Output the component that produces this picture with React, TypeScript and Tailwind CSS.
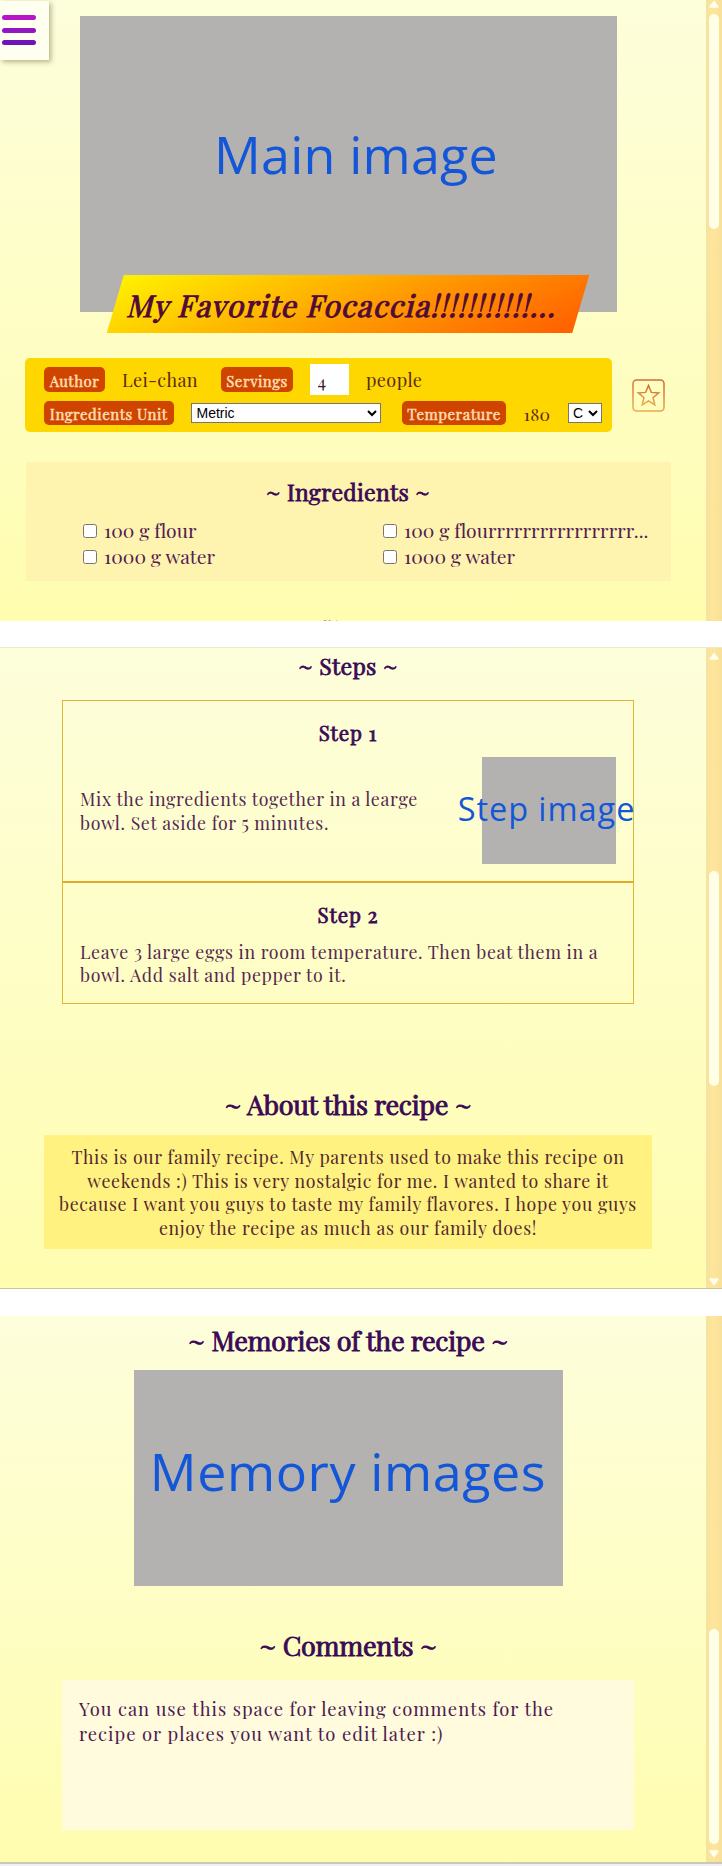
import type { ReactNode } from "react";

function Panel({ className, track, children }: { className: string; track: ReactNode; children: ReactNode }) {
  return (
    <section className={`flex w-full overflow-hidden bg-linear-to-b from-[#fdfedb] to-[#fffdaf] ${className}`}>
      <div className="flex w-[696px] shrink-0 flex-col items-center">{children}</div>
      <div className="ml-auto flex w-4 shrink-0 flex-col items-center bg-linear-to-r from-[#f6e3a0] via-[#ffe598] to-[#f6e09b]">
        {track}
      </div>
    </section>
  );
}

function Arrow({ down = false }: { down?: boolean }) {
  return (
    <svg viewBox="0 0 12 8" className="h-2 w-3 shrink-0">
      <path
        d={down ? "M2 1h8L6 6.5z" : "M2 7h8L6 1.5z"}
        fill="#fffff0"
        stroke="#fffff0"
        strokeWidth="1.4"
        strokeLinejoin="round"
      />
    </svg>
  );
}

function Thumb({ className }: { className: string }) {
  return <div className={`h-[215px] w-2.5 shrink-0 rounded-full bg-[#ffffe8] ${className}`} />;
}

function SmallHeading({ children }: { children: ReactNode }) {
  return (
    <h2 className="text-[23px] leading-8 font-normal tracking-[0.3px] whitespace-nowrap text-[#3b0a56] [-webkit-text-stroke:0.8px_#3b0a56]">
      {children}
    </h2>
  );
}

function LargeHeading({ className, children }: { className: string; children: ReactNode }) {
  return (
    <h2
      className={`text-[27px] leading-9 font-normal tracking-[-0.28px] whitespace-nowrap text-[#3b0a56] [-webkit-text-stroke:0.9px_#3b0a56] ${className}`}
    >
      {children}
    </h2>
  );
}

function StepTitle({ children }: { children: ReactNode }) {
  return (
    <h3 className="text-center text-[20.5px] leading-7 font-normal tracking-[0.9px] text-[#3b0a56] [-webkit-text-stroke:0.8px_#3b0a56]">
      {children}
    </h3>
  );
}

function Tag({ className, children }: { className: string; children: ReactNode }) {
  return (
    <span
      className={`flex h-[24.5px] items-center justify-center rounded-[5px] bg-[#cf4500] pt-0.5 text-[15px] leading-6 tracking-[0.5px] whitespace-nowrap text-[#ffdfb3] [-webkit-text-stroke:0.5px_#ffdfb3] ${className}`}
    >
      {children}
    </span>
  );
}

function Ingredient({ children }: { children: ReactNode }) {
  return (
    <label className="flex h-[25.7px] items-center text-[19.3px] leading-[25.7px] tracking-[0.04px] whitespace-nowrap text-[#502050]">
      <input type="checkbox" className="mr-[7px] h-3.5 w-3.5" />
      {children}
    </label>
  );
}

export default function App() {
  return (
    <main className="flex h-[1866px] w-[722px] flex-col overflow-hidden bg-white font-['Playfair_Display','Liberation_Serif',serif]">
      <Panel
        className="h-[620.5px]"
        track={
          <>
            <Arrow />
            <Thumb className="mt-1.5" />
          </>
        }
      >
        <button
          aria-label="Menu"
          className="absolute top-px left-0 flex h-[59px] w-[48.5px] flex-col gap-[7.5px] bg-[#fffff0] pt-3.5 pl-0.5 shadow-[2px_2px_5px_rgba(90,90,40,0.45)]"
        >
          <span className="h-[5px] w-[34px] rounded-full bg-[#b915c8]" />
          <span className="h-[5px] w-[34px] rounded-full bg-[#9216c4]" />
          <span className="h-[5px] w-[34px] rounded-full bg-[#6f14b8]" />
        </button>

        <div className="mt-4 flex h-[296px] w-[537px] shrink-0 justify-center bg-[#b3b2b0] pt-[102px] pl-4 font-['Open_Sans',sans-serif] text-[52px] leading-[71px] tracking-[0.2px] text-[#1357d8]">
          Main image
        </div>
        <div className="-mt-[37px] flex h-[58px] w-[482.5px] shrink-0 items-center bg-[linear-gradient(155deg,#ffee00_5%,#ff9c00_55%,#ff6200_95%)] pt-0.5 pl-[22.5px] [clip-path:polygon(17px_0,100%_0,465.5px_100%,0_100%)]">
          <h1 className="-skew-x-[14deg] text-[30px] leading-10 font-normal tracking-[1.18px] whitespace-nowrap text-[#520a38] [-webkit-text-stroke:1px_#520a38]">
            My Favorite Focaccia!!!!!!!!!!!...
          </h1>
        </div>

        <div className="mt-[25px] flex w-full shrink-0 items-center pl-[25px]">
          <div className="flex h-[73.5px] w-[586.5px] flex-col rounded-[5px] bg-[#ffd700] pt-1.5 pl-[19px] text-[18px] tracking-[0.4px] text-[#5a2a1c]">
            <div className="flex h-[31px] items-center">
              <Tag className="w-[61px]">Author</Tag>
              <span className="ml-[17px] w-[99px] pt-0.5">Lei-chan</span>
              <Tag className="w-[72px]">Servings</Tag>
              <input
                defaultValue="4"
                className="ml-[16.5px] h-[31px] w-[39px] bg-white pt-0.5 pl-2 text-[17.5px] text-[#3b2030]"
              />
              <span className="ml-[17.5px] pt-0.5">people</span>
            </div>
            <div className="mt-[5.5px] flex h-[25px] items-center">
              <Tag className="w-[129.5px]">Ingredients Unit</Tag>
              <select className="ml-[17px] h-5 w-[190px] border border-[#767676] bg-white pl-px font-['Liberation_Sans',sans-serif] text-[14px] leading-4 tracking-normal text-black">
                <option>Metric</option>
              </select>
              <Tag className="ml-[21.5px] w-[104px]">Temperature</Tag>
              <span className="ml-[17.5px] w-[44.5px] pt-0.5 text-[17.5px] tracking-[0.2px]">180</span>
              <select className="h-5 w-[34px] border border-[#767676] bg-white font-['Liberation_Sans',sans-serif] text-[14px] leading-4 tracking-normal text-black">
                <option>C</option>
              </select>
            </div>
          </div>
          <svg viewBox="0 0 33 33" className="mt-px ml-5 h-[33px] w-[33px]" fill="none">
            <defs>
              <linearGradient id="star" x1="0.6" y1="0" x2="0.4" y2="1">
                <stop offset="0" stopColor="#cf6b3c" />
                <stop offset="1" stopColor="#e9ad4c" />
              </linearGradient>
            </defs>
            <rect x="1" y="1" width="31" height="31" rx="3.5" stroke="url(#star)" strokeWidth="1.5" />
            <path
              d="M16.5 6.5l2.8 6.9 7.4.5-5.7 4.8 1.8 7.2-6.3-4-6.3 4 1.8-7.2-5.7-4.8 7.4-.5z"
              stroke="url(#star)"
              strokeWidth="1.5"
            />
          </svg>
        </div>

        <div className="mt-[30.5px] flex h-[119px] w-[645px] shrink-0 flex-col items-center bg-[#fff3b0] pt-[13.5px]">
          <SmallHeading>~ Ingredients ~</SmallHeading>
          <div className="mt-[10.5px] grid w-full grid-cols-[300px_1fr] pl-[57.5px]">
            <Ingredient>100 g flour</Ingredient>
            <Ingredient>100 g flourrrrrrrrrrrrrrrrr...</Ingredient>
            <Ingredient>1000 g water</Ingredient>
            <Ingredient>1000 g water</Ingredient>
          </div>
        </div>
        <div className="mt-[30.5px] shrink-0">
          <SmallHeading>~ Steps ~</SmallHeading>
        </div>
      </Panel>

      <Panel
        className="mt-[26.5px] h-[642px] border-t border-b border-t-[#ecebcf] border-b-[#c9c5a2]"
        track={
          <>
            <div className="pt-1">
              <Arrow />
            </div>
            <Thumb className="mt-[211px]" />
            <div className="mt-auto pb-0.5">
              <Arrow down />
            </div>
          </>
        }
      >
        <div className="mt-0.5 shrink-0">
          <SmallHeading>~ Steps ~</SmallHeading>
        </div>
        <div className="mt-[18px] w-[572px] shrink-0 text-[17.75px] leading-[23.7px] tracking-[0.64px] whitespace-nowrap text-[#54284f]">
          <div className="h-[182px] border border-[#dfb53a] border-b-[#e0aa2a] px-[17px] pt-[17.5px]">
            <StepTitle>Step 1</StepTitle>
            <div className="mt-[10.2px] flex h-[107px] items-center justify-between">
              <p className="pt-0.5">
                Mix the ingredients together in a learge
                <br />
                bowl. Set aside for 5 minutes.
              </p>
              <div className="flex h-[107px] w-[134px] items-center justify-center bg-[#b3b2b0] pr-[5px] pb-0.5 font-['Open_Sans',sans-serif] text-[32.5px] leading-none tracking-[0.95px] text-[#1357d8]">
                Step image
              </div>
            </div>
          </div>
          <div className="h-[121.5px] border border-[#dfb53a] border-t-[#e0aa2a] px-[17px] pt-[18px]">
            <StepTitle>Step 2</StepTitle>
            <p className="mt-[10.7px]">
              Leave 3 large eggs in room temperature. Then beat them in a
              <br />
              bowl. Add salt and pepper to it.
            </p>
          </div>
        </div>
        <LargeHeading className="mt-[82.5px]">~ About this recipe ~</LargeHeading>
        <p className="mt-[13px] h-[113.5px] w-[608px] shrink-0 bg-[#fff280] pt-[9.8px] text-center text-[17.75px] leading-[23.7px] tracking-[0.64px] whitespace-nowrap text-[#54282e]">
          This is our family recipe. My parents used to make this recipe on
          <br />
          weekends :) This is very nostalgic for me. I wanted to share it
          <br />
          because I want you guys to taste my family flavores. I hope you guys
          <br />
          enjoy the recipe as much as our family does!
        </p>
      </Panel>

      <Panel
        className="mt-[27px] h-[546px]"
        track={
          <>
            <Thumb className="mt-[313px]" />
            <div className="mt-auto pb-1">
              <Arrow down />
            </div>
          </>
        }
      >
        <LargeHeading className="mt-1.5">~ Memories of the recipe ~</LargeHeading>
        <div className="mt-3 flex h-[215.5px] w-[429px] shrink-0 justify-center bg-[#b3b2b0] pt-[65px] font-['Open_Sans',sans-serif] text-[52px] leading-[71px] tracking-[0.6px] whitespace-nowrap text-[#1357d8]">
          Memory images
        </div>
        <LargeHeading className="mt-[41px]">~ Comments ~</LargeHeading>
        <p className="mt-[17.5px] h-[149.5px] w-[572px] shrink-0 bg-[#fffbdc] pt-[17px] pl-[17px] text-[18.4px] leading-[24.7px] tracking-[1px] whitespace-nowrap text-[#4b1a50]">
          You can use this space for leaving comments for the
          <br />
          recipe or places you want to edit later :)
        </p>
      </Panel>
      <div className="h-0.5 shrink-0 bg-[#c9c9b4]" />
      <div className="grow bg-[#f1f1f1]" />
    </main>
  );
}
